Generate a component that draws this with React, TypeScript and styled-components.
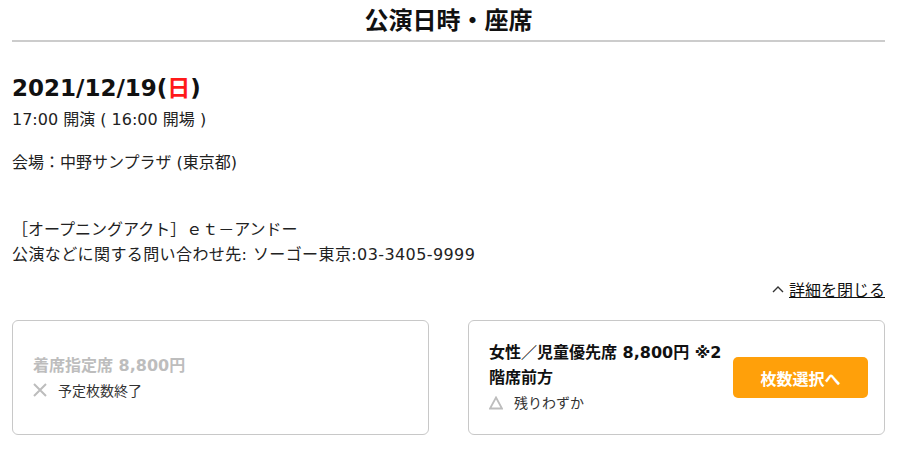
import styled, { createGlobalStyle } from 'styled-components'

const GlobalStyle = createGlobalStyle`
  html, body {
    margin: 0;
    padding: 0;
    background: #fff;
  }
  body {
    font-family: 'DejaVu Sans', 'Noto Sans CJK JP', sans-serif;
    color: #222;
  }
`

const Page = styled.div`
  padding: 0 25px 20px 12px;
  display: flex;
  flex-direction: column;
`

const SectionTitle = styled.h2`
  margin: 0;
  padding: 5px 0 7px;
  font-family: 'Noto Sans CJK JP', sans-serif;
  font-size: 24px;
  font-weight: 700;
  text-align: center;
  line-height: 28px;
  color: #111;
  border-bottom: 2px solid #cccccc;
`

const DateTitle = styled.h3`
  margin: 30px 0 0;
  font-size: 23px;
  font-weight: 700;
  line-height: 28px;
  color: #111;
`

const Sunday = styled.span`
  color: #ff1a1a;
  font-family: 'Noto Sans CJK JP', sans-serif;
`

const InfoLine = styled.p<{ $gap?: number; $spacing?: number }>`
  margin: ${p => p.$gap ?? 0}px 0 0;
  font-size: 16px;
  line-height: 25px;
  letter-spacing: ${p => p.$spacing ?? 0}px;
`

const Toggle = styled.div`
  margin-top: 11px;
  display: flex;
  justify-content: flex-end;
  align-items: center;
  gap: 5px;
  font-size: 16px;
  line-height: 22px;
`

const ToggleLink = styled.a`
  color: #111;
  text-decoration: underline;
  font-family: 'Noto Sans CJK JP', sans-serif;
`

const SeatGrid = styled.div`
  margin-top: 20px;
  display: grid;
  grid-template-columns: 1fr 1fr;
  gap: 39px;
`

const SeatCard = styled.div`
  border: 1px solid #c8c8c8;
  border-radius: 6px;
  min-height: 115px;
  box-sizing: border-box;
  padding: 0 16px 0 20px;
  display: flex;
  align-items: center;
  justify-content: space-between;
  gap: 6px;
`

const SeatInfo = styled.div`
  display: flex;
  flex-direction: column;
  max-width: 245px;
`

const SeatName = styled.div<{ $soldOut?: boolean }>`
  font-size: 16px;
  font-weight: 700;
  line-height: 25px;
  color: ${p => (p.$soldOut ? '#bdbdbd' : '#111')};
`

const Status = styled.div`
  display: flex;
  align-items: center;
  gap: 11px;
  font-size: 14px;
  line-height: 25px;
  color: #333;
  font-family: 'Noto Sans CJK JP', sans-serif;
`

const StatusIcon = styled.svg`
  width: 14px;
  height: 14px;
  flex: none;
`

const SelectButton = styled.button`
  width: 135px;
  height: 41px;
  flex: none;
  border: none;
  border-radius: 5px;
  background: #ffa00a;
  color: #fff;
  font-family: 'Noto Sans CJK JP', sans-serif;
  font-size: 16px;
  font-weight: 700;
  cursor: pointer;
`

const seats = [
  { id: 'a', name: '着席指定席 8,800円', status: 'sold', label: '予定枚数終了' },
  { id: 'b', name: '女性／児童優先席 8,800円 ※2\u200B階席前方', status: 'few', label: '残りわずか' },
]

function CrossIcon() {
  return (
    <StatusIcon viewBox="0 0 14 14">
      <path d="M1 1 L13 13 M13 1 L1 13" stroke="#bdbdbd" strokeWidth="2" fill="none" />
    </StatusIcon>
  )
}

function TriangleIcon() {
  return (
    <StatusIcon viewBox="0 0 14 14">
      <path d="M7 1.5 L13 12.5 L1 12.5 Z" stroke="#bdbdbd" strokeWidth="1.8" fill="none" />
    </StatusIcon>
  )
}

export default function App() {
  return (
    <>
      <GlobalStyle />
      <Page>
        <SectionTitle>公演日時・座席</SectionTitle>

        <DateTitle>
          2021/12/19(<Sunday>日</Sunday>)
        </DateTitle>
        <InfoLine $gap={5}>17:00 開演 ( 16:00 開場 )</InfoLine>
        <InfoLine $gap={18}>会場：中野サンプラザ (東京都)</InfoLine>
        <InfoLine $gap={42}>［オープニングアクト］ｅｔ－アンドー</InfoLine>
        <InfoLine $spacing={0.4}>公演などに関する問い合わせ先: ソーゴー東京:03-3405-9999</InfoLine>

        <Toggle>
          <svg width="12" height="10" viewBox="0 0 12 10">
            <path d="M1 8 L6 3 L11 8" stroke="#333" strokeWidth="1.4" fill="none" />
          </svg>
          <ToggleLink>詳細を閉じる</ToggleLink>
        </Toggle>

        <SeatGrid>
          {seats.map(seat => (
            <SeatCard key={seat.id}>
              <SeatInfo>
                <SeatName $soldOut={seat.status === 'sold'}>{seat.name}</SeatName>
                <Status>
                  {seat.status === 'sold' ? <CrossIcon /> : <TriangleIcon />}
                  {seat.label}
                </Status>
              </SeatInfo>
              {seat.status !== 'sold' && <SelectButton>枚数選択へ</SelectButton>}
            </SeatCard>
          ))}
        </SeatGrid>
      </Page>
    </>
  )
}
